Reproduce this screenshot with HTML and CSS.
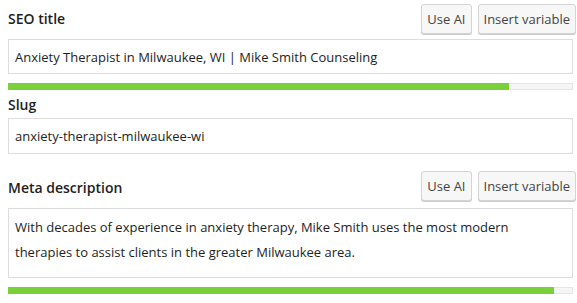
FILE: index.html
```html
<!DOCTYPE html>
<html lang="en">
<head>
    <meta charset="UTF-8">
    <meta name="viewport" content="width=device-width, initial-scale=1.0">
    <title>SEO Fields</title>
    <link rel="stylesheet" href="styles.css">
</head>
<body>
    <div class="panel">
        <div class="field-head first">
            <label class="label">SEO title</label>
            <div class="actions">
                <button class="btn">Use AI</button>
                <button class="btn">Insert variable</button>
            </div>
        </div>
        <div class="input title">Anxiety Therapist in Milwaukee, WI | Mike Smith Counseling</div>
        <div class="progress"><div class="progress-fill" style="width: 88.7%"></div></div>

        <label class="label slug-label">Slug</label>
        <div class="input slug">anxiety-therapist-milwaukee-wi</div>

        <div class="field-head meta">
            <label class="label">Meta description</label>
            <div class="actions">
                <button class="btn">Use AI</button>
                <button class="btn">Insert variable</button>
            </div>
        </div>
        <div class="textarea">With decades of experience in anxiety therapy, Mike Smith uses the most modern therapies to assist clients in the greater Milwaukee area.</div>
        <div class="progress"><div class="progress-fill" style="width: 96.6%"></div></div>
    </div>
</body>
</html>
```

FILE: styles.css
```css
body {
    margin: 0;
    padding: 0;
    background: #fff;
    font-family: "Open Sans", "Noto Sans", sans-serif;
    font-size: 13px;
    color: #1e1e1e;
}
.panel {
    width: 565px;
    padding: 3px 0 0 8px;
}
.field-head {
    display: flex;
    justify-content: space-between;
    align-items: center;
    height: 32px;
    margin-right: -3px;
}
.field-head.first {
    margin-bottom: 4px;
}
.field-head.meta {
    margin-top: 16px;
    margin-bottom: 6px;
}
.field-head.meta .label {
    padding-top: 3px;
}
.label {
    display: block;
    font-weight: 600;
    font-size: 14px;
    line-height: 20px;
    color: #1e1e1e;
}
.slug-label {
    margin-top: 5px;
    margin-bottom: 3px;
}
.actions {
    display: flex;
    gap: 6px;
}
.btn {
    height: 30px;
    padding: 0 5px;
    font-family: inherit;
    font-size: 13px;
    color: #444;
    background: #f7f7f7;
    border: 1px solid #d4d4d4;
    border-radius: 3px;
    box-shadow: 0 1px 0 #cccccc;
}
.input {
    box-sizing: border-box;
    height: 36px;
    display: flex;
    align-items: center;
    padding: 0 6px;
    border: 1px solid #dddddd;
    color: #1e1e1e;
    white-space: nowrap;
}
.input.title {
    height: 35px;
}
.textarea {
    box-sizing: border-box;
    height: 70px;
    padding: 6px 6px 0;
    border: 1px solid #dddddd;
    line-height: 25px;
    color: #1e1e1e;
}
.progress {
    height: 7px;
    margin-top: 9px;
    background: #f5f5f5;
    box-shadow: inset 0 0 0 1px #e6e6e6;
}
.progress-fill {
    height: 7px;
    background: #7ad03a;
}
```
